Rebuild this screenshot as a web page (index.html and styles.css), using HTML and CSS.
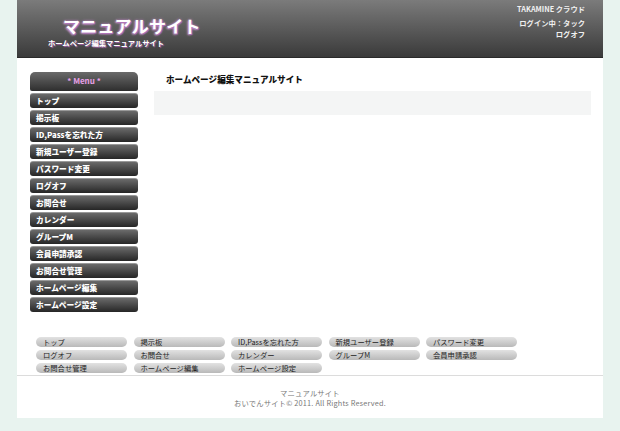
FILE: index.html
```html
<!DOCTYPE html>
<html lang="ja">
<head>
<meta charset="utf-8">
<title>マニュアルサイト</title>
<link rel="stylesheet" href="styles.css">
</head>
<body>
<div class="page">
  <header class="header">
    <div class="brand">
      <div class="site-title">マニュアルサイト</div>
      <div class="site-sub">ホームページ編集マニュアルサイト</div>
    </div>
    <div class="user">
      <div class="company">TAKAMINE クラウド</div>
      <div class="login">ログイン中：タック</div>
      <div class="logoff">ログオフ</div>
    </div>
  </header>
  <div class="content">
    <nav class="sidebar">
      <div class="menu-head">* Menu *</div>
      <a class="menu-item">トップ</a>
      <a class="menu-item">掲示板</a>
      <a class="menu-item">ID,Passを忘れた方</a>
      <a class="menu-item">新規ユーザー登録</a>
      <a class="menu-item">パスワード変更</a>
      <a class="menu-item">ログオフ</a>
      <a class="menu-item">お問合せ</a>
      <a class="menu-item">カレンダー</a>
      <a class="menu-item">グループM</a>
      <a class="menu-item">会員申請承認</a>
      <a class="menu-item">お問合せ管理</a>
      <a class="menu-item">ホームページ編集</a>
      <a class="menu-item">ホームページ設定</a>
    </nav>
    <main class="main">
      <h1 class="main-title">ホームページ編集マニュアルサイト</h1>
      <div class="main-box"></div>
    </main>
  </div>
  <nav class="footer-nav">
    <a class="pill">トップ</a>
    <a class="pill">掲示板</a>
    <a class="pill">ID,Passを忘れた方</a>
    <a class="pill">新規ユーザー登録</a>
    <a class="pill">パスワード変更</a>
    <a class="pill">ログオフ</a>
    <a class="pill">お問合せ</a>
    <a class="pill">カレンダー</a>
    <a class="pill">グループM</a>
    <a class="pill">会員申請承認</a>
    <a class="pill">お問合せ管理</a>
    <a class="pill">ホームページ編集</a>
    <a class="pill">ホームページ設定</a>
  </nav>
  <footer class="footer">
    <div>マニュアルサイト</div>
    <div>おいでんサイト© 2011. All Rights Reserved.</div>
  </footer>
</div>
</body>
</html>
```

FILE: styles.css
```css
* { box-sizing: border-box; }
html, body { margin: 0; padding: 0; }
body {
  background: #e8f3ef;
  font-family: "Noto Sans CJK JP", "Liberation Sans", sans-serif;
  width: 620px;
  height: 431px;
  overflow: hidden;
}
.page {
  margin: 0 17px;
  width: 586px;
  height: 418px;
  background: #fff;
  display: flex;
  flex-direction: column;
}
.header {
  height: 58px;
  background: linear-gradient(#7b7b7b, #3a3a3a);
  border-bottom: 1px solid #2a2a2a;
  display: flex;
  justify-content: space-between;
  color: #fff;
}
.brand {
  padding: 14px 0 0 31px;
}
.site-title {
  font-size: 17px;
  font-weight: bold;
  line-height: 24px;
  padding-left: 15px;
  letter-spacing: 0.3px;
  text-shadow: 1px 1px 1px #b070b8, -1px 1px 2px #d0a0d8, 0 0 3px #c080c8;
}
.site-sub {
  font-size: 7.3px;
  font-weight: bold;
  line-height: 10px;
  text-shadow: 1px 1px 1px #a060a8;
}
.user {
  padding: 4px 18px 0 0;
  text-align: right;
  font-size: 7.3px;
  font-weight: bold;
  color: #f0f0f0;
  line-height: 11px;
}
.company { margin-bottom: 3px; }
.content {
  display: flex;
  padding: 14px 12px 0 13px;
  gap: 15px;
  height: 279px;
  flex-shrink: 0;
}
.sidebar {
  width: 108px;
  display: flex;
  flex-direction: column;
  gap: 2px;
}
.menu-head {
  height: 19px;
  border-radius: 5px 5px 2px 2px;
  background: linear-gradient(#6a6a6a, #2e2e2e);
  color: #e8a0e8;
  font-size: 8px;
  font-weight: bold;
  text-align: center;
  line-height: 18px;
}
.menu-item {
  height: 15px;
  border-radius: 3px;
  background: linear-gradient(#6a6a6a, #262626);
  border-top: 1px solid #999;
  color: #fff;
  font-size: 7.7px;
  font-weight: 900;
  line-height: 13px;
  padding-left: 6px;
}
.main {
  flex: 1;
}
.main-title {
  margin: 0;
  font-size: 8.6px;
  font-weight: 900;
  color: #111;
  line-height: 14px;
  padding: 0 0 5px 13px;
}
.main-box {
  height: 24px;
  background: #f4f5f5;
  margin-left: 1px;
}
.footer-nav {
  display: grid;
  grid-template-columns: repeat(5, 91px);
  column-gap: 6.5px;
  row-gap: 1px;
  padding: 0 0 0 19px;
  height: 38px;
  flex-shrink: 0;
}
.pill {
  height: 10px;
  border-radius: 5px;
  background: linear-gradient(#e2e2e2, #b9b9b9);
  color: #222;
  font-size: 7.3px;
  line-height: 10px;
  padding-left: 7px;
}
.footer {
  border-top: 1px solid #dcdcdc;
  text-align: center;
  color: #777;
  font-size: 7.3px;
  line-height: 10px;
  padding-top: 12px;
  letter-spacing: 0.2px;
}
```
